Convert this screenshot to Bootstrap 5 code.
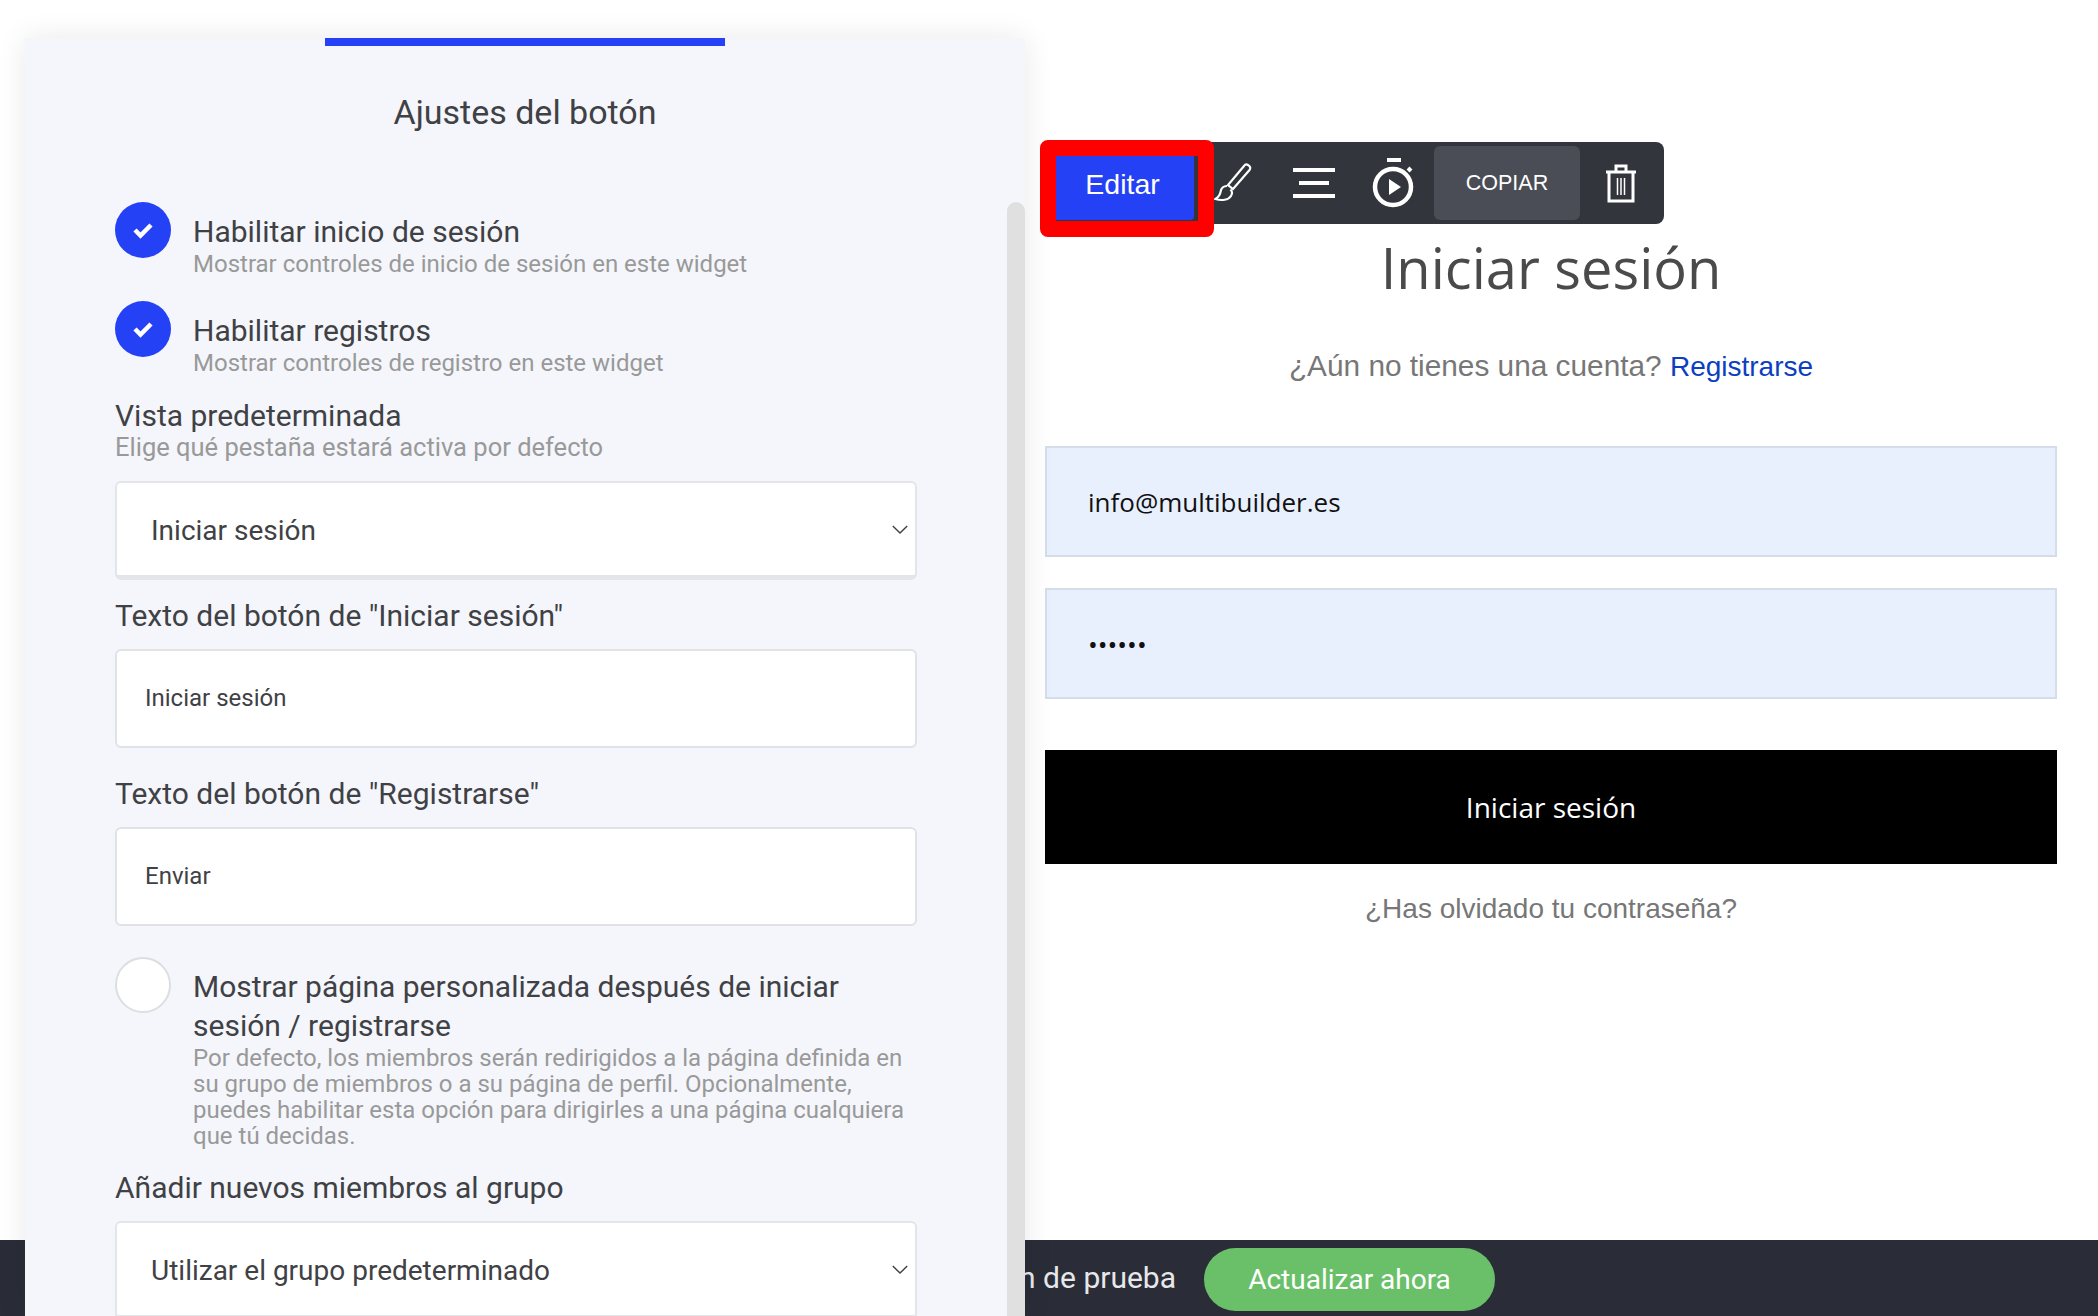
<!DOCTYPE html>
<html lang="es">
<head>
    <meta charset="UTF-8">
    <meta name="viewport" content="width=device-width, initial-scale=1.0">
    <title>Ajustes del botón</title>
    <link rel="stylesheet" href="https://cdn.jsdelivr.net/npm/bootstrap@5.3.0/dist/css/bootstrap.min.css">
    <style>
        html, body { height: 1316px; overflow: hidden; }
        body { background: #fff; font-family: Roboto, sans-serif; color: #3f4145; position: relative; }

        /* ajustes */
        .settings-panel { position: relative; z-index: 2; width: 1000px; height: 1278px; margin: 38px 0 0 25px; padding: 0 108px 0 90px; background: #f4f6fb; box-shadow: 0 0 28px rgba(0,0,0,.09); overflow: hidden; flex: none; }
        .panel-tab { position: absolute; top: 0; left: 300px; width: 400px; height: 8px; background: #2541f5; }
        .panel-title { margin: 52px 0 68px; height: 44px; line-height: 44px; font-size: 34px; font-weight: 400; color: #3f4145; transform: translateX(9px); }
        .panel-scroll { position: absolute; right: 0; top: 164px; bottom: 0; width: 18px; background: #e0e0e0; border-radius: 9px 9px 0 0; }
        .opt-row { display: flex; gap: 22px; margin-bottom: 24px; }
        .opt-circle { width: 56px; height: 56px; flex: none; border-radius: 50%; background: #2541f5; display: flex; align-items: center; justify-content: center; }
        .opt-circle.off { background: #fff; border: 2px solid #dcdee2; }
        .opt-text { padding-top: 11px; }
        .opt-label { font-size: 30px; line-height: 38px; color: #3f4145; }
        .opt-hint { font-size: 24px; line-height: 26px; color: #999; }
        .field-label { font-size: 30px; line-height: 36px; color: #3f4145; }
        .field-hint { font-size: 25.5px; line-height: 30px; color: #999; }
        .form-select.panel-select { height: 99px; margin-top: 19px; padding: 3px 40px 0 34px; font-family: Roboto, sans-serif; font-size: 28px; color: #3f4145; border: 2px solid #e4e5e8; border-bottom-width: 5px; border-radius: 6px; background-position: right 6px center; background-size: 18px 11px; background-image: url("data:image/svg+xml,%3csvg xmlns='http://www.w3.org/2000/svg' viewBox='0 0 20 12'%3e%3cpath fill='none' stroke='%233f4145' stroke-width='1.6' d='M2 2l8 8 8-8'/%3e%3c/svg%3e"); }
        .form-control.panel-input { height: 99px; margin-top: 15px; padding: 0 28px 2px; font-family: Roboto, sans-serif; font-size: 24px; color: #3f4145; border: 2px solid #e0e2e6; border-radius: 6px; }

        /* vista previa */
        .preview { position: relative; flex: 1; padding: 0 41px 0 20px; }
        .tool-bar { position: absolute; left: 175px; top: 142px; width: 464px; height: 82px; background: #32353b; border-radius: 8px; }
        .tool-edit { position: absolute; left: 15px; top: 140px; width: 174px; height: 97px; border: 16px solid #f00; border-radius: 8px; background: #32353b; }
        .tool-edit span { display: block; width: 138px; height: 64px; padding-right: 5px; line-height: 56px; background: #2541f5; color: #fff; font-family: "Liberation Sans", sans-serif; font-size: 28.5px; text-align: center; border-radius: 0 0 4px 0; }
        .tool-icon { position: absolute; top: 0; height: 82px; display: flex; align-items: center; justify-content: center; }
        .tool-copy { position: absolute; left: 234px; top: 4px; width: 146px; height: 74px; line-height: 74px; background: #4a4d55; border-radius: 6px; color: #fff; font-family: "Liberation Sans", sans-serif; font-size: 21.5px; text-align: center; }
        .login-title { margin: 230px 0 0; height: 74px; line-height: 74px; font-family: "Open Sans", sans-serif; font-size: 56px; font-weight: 400; color: #4a4a4a; }
        .login-sub { margin: 43px 0 0; height: 38px; line-height: 38px; font-family: "Liberation Sans", sans-serif; font-size: 29.8px; color: #777; }
        .login-sub a { color: #0b3fc0; font-size: 28px; text-decoration: none; }
        .form-control.login-input { height: 111px; padding: 0 41px; border: 2px solid #d5dde8; border-radius: 0; background: #e8f0fe; font-family: "Open Sans", sans-serif; font-size: 26px; color: #111; }
        .login-btn.btn { width: 100%; height: 114px; margin-top: 51px; border: 0; border-radius: 0; background: #000; color: #fff; font-family: "Open Sans", sans-serif; font-size: 28px; }
        .login-forgot { margin-top: 26px; line-height: 38px; font-family: "Liberation Sans", sans-serif; font-size: 28px; color: #777; }

        /* barra inferior */
        .trial-bar { position: absolute; z-index: 1; left: 0; right: 0; bottom: 0; height: 76px; background: #2a2d38; }
        .trial-text { position: absolute; right: 922px; top: 0; line-height: 76px; font-size: 30px; color: #e8e8ea; white-space: nowrap; }
        .trial-btn.btn { position: absolute; left: 1204px; top: 8px; width: 291px; height: 63px; padding: 0; border: 0; border-radius: 32px; background: #6abf69; color: #fff; font-family: Roboto, sans-serif; font-size: 28px; }
    </style>
</head>
<body>

<div class="d-flex">
    <!-- Panel de ajustes -->
    <div class="settings-panel">
        <div class="panel-tab"></div>
        <div class="panel-scroll"></div>
        <h2 class="panel-title text-center">Ajustes del botón</h2>

        <div class="opt-row">
            <div class="opt-circle"><svg width="22" height="18" viewBox="0 0 22 18"><path d="M3 9l5.500 5.500L19 4" fill="none" stroke="#fff" stroke-width="4.500"/></svg></div>
            <div class="opt-text">
                <div class="opt-label">Habilitar inicio de sesión</div>
                <div class="opt-hint">Mostrar controles de inicio de sesión en este widget</div>
            </div>
        </div>
        <div class="opt-row">
            <div class="opt-circle"><svg width="22" height="18" viewBox="0 0 22 18"><path d="M3 9l5.500 5.500L19 4" fill="none" stroke="#fff" stroke-width="4.500"/></svg></div>
            <div class="opt-text">
                <div class="opt-label">Habilitar registros</div>
                <div class="opt-hint">Mostrar controles de registro en este widget</div>
            </div>
        </div>

        <div class="field-label" style="margin-top: 21px; line-height: 32px;">Vista predeterminada</div>
        <div class="field-hint">Elige qué pestaña estará activa por defecto</div>
        <select class="form-select panel-select">
            <option>Iniciar sesión</option>
        </select>

        <div class="field-label" style="margin-top: 18px;">Texto del botón de "Iniciar sesión"</div>
        <input type="text" class="form-control panel-input" value="Iniciar sesión">

        <div class="field-label" style="margin-top: 28px;">Texto del botón de "Registrarse"</div>
        <input type="text" class="form-control panel-input" value="Enviar">

        <div class="opt-row" style="margin: 31px 0 0;">
            <div class="opt-circle off"></div>
            <div class="opt-text" style="padding-top: 10px;">
                <div class="opt-label" style="line-height: 39px;">Mostrar página personalizada después de iniciar sesión / registrarse</div>
                <div class="opt-hint">Por defecto, los miembros serán redirigidos a la página definida en su grupo de miembros o a su página de perfil. Opcionalmente, puedes habilitar esta opción para dirigirles a una página cualquiera que tú decidas.</div>
            </div>
        </div>

        <div class="field-label" style="margin-top: 21px;">Añadir nuevos miembros al grupo</div>
        <select class="form-select panel-select" style="margin-top: 15px;">
            <option>Utilizar el grupo predeterminado</option>
        </select>
    </div>

    <!-- Vista previa del widget -->
    <div class="preview text-center">
        <div class="tool-bar">
            <div class="tool-icon" style="left: 7px; width: 50px;">
                <svg width="42" height="42" viewBox="0 0 42 42" fill="none" stroke="#fff" stroke-width="2.200"><path d="M37 3c2 1 3 3 1.500 5L22 27l-5-4L33 4c1-1.500 2.500-2 4-1z"/><path d="M16 24c-4 0-6 3-6.500 6-.5 3-2 5-5 7 6 2 13 1 15.500-3 1.500-2.500 1-5-.5-6.500"/></svg>
            </div>
            <div class="tool-icon" style="left: 89px; width: 50px;">
                <svg width="42" height="30" viewBox="0 0 42 30" fill="#fff"><rect x="0" y="0" width="42" height="4"/><rect x="6" y="13" width="30" height="4"/><rect x="0" y="26" width="42" height="4"/></svg>
            </div>
            <div class="tool-icon" style="left: 169px; width: 50px;">
                <svg width="44" height="50" viewBox="0 0 44 50" fill="none" stroke="#fff"><path d="M15 2h14" stroke-width="4"/><circle cx="21" cy="29" r="18" stroke-width="4.500"/><path d="M36 10l3 3" stroke-width="4"/><path d="M17 21l12 8-12 8z" fill="#fff" stroke="none"/></svg>
            </div>
            <div class="tool-copy">COPIAR</div>
            <div class="tool-icon" style="left: 396px; width: 50px;">
                <svg width="32" height="40" viewBox="0 0 32 40" fill="none" stroke="#fff" stroke-width="3"><path d="M1 9h30M11 8V3h10v5M4 9v29h24V9"/><path d="M12.500 15v17M16 15v17M19.500 15v17" stroke-width="1.500"/></svg>
            </div>
        </div>
        <div class="tool-edit"><span>Editar</span></div>

        <h1 class="login-title">Iniciar sesión</h1>
        <p class="login-sub">¿Aún no tienes una cuenta? <a href="#">Registrarse</a></p>
        <input type="text" class="form-control login-input" style="margin-top: 61px;" value="info@multibuilder.es">
        <input type="password" class="form-control login-input" style="margin-top: 31px;" value="123456">
        <button class="btn login-btn">Iniciar sesión</button>
        <div class="login-forgot">¿Has olvidado tu contraseña?</div>
    </div>
</div>

<!-- Barra inferior -->
<div class="trial-bar">
    <span class="trial-text">versión de prueba</span>
    <button class="btn trial-btn">Actualizar ahora</button>
</div>

<script src="https://cdn.jsdelivr.net/npm/bootstrap@5.3.0/dist/js/bootstrap.bundle.min.js"></script>
</body>
</html>
